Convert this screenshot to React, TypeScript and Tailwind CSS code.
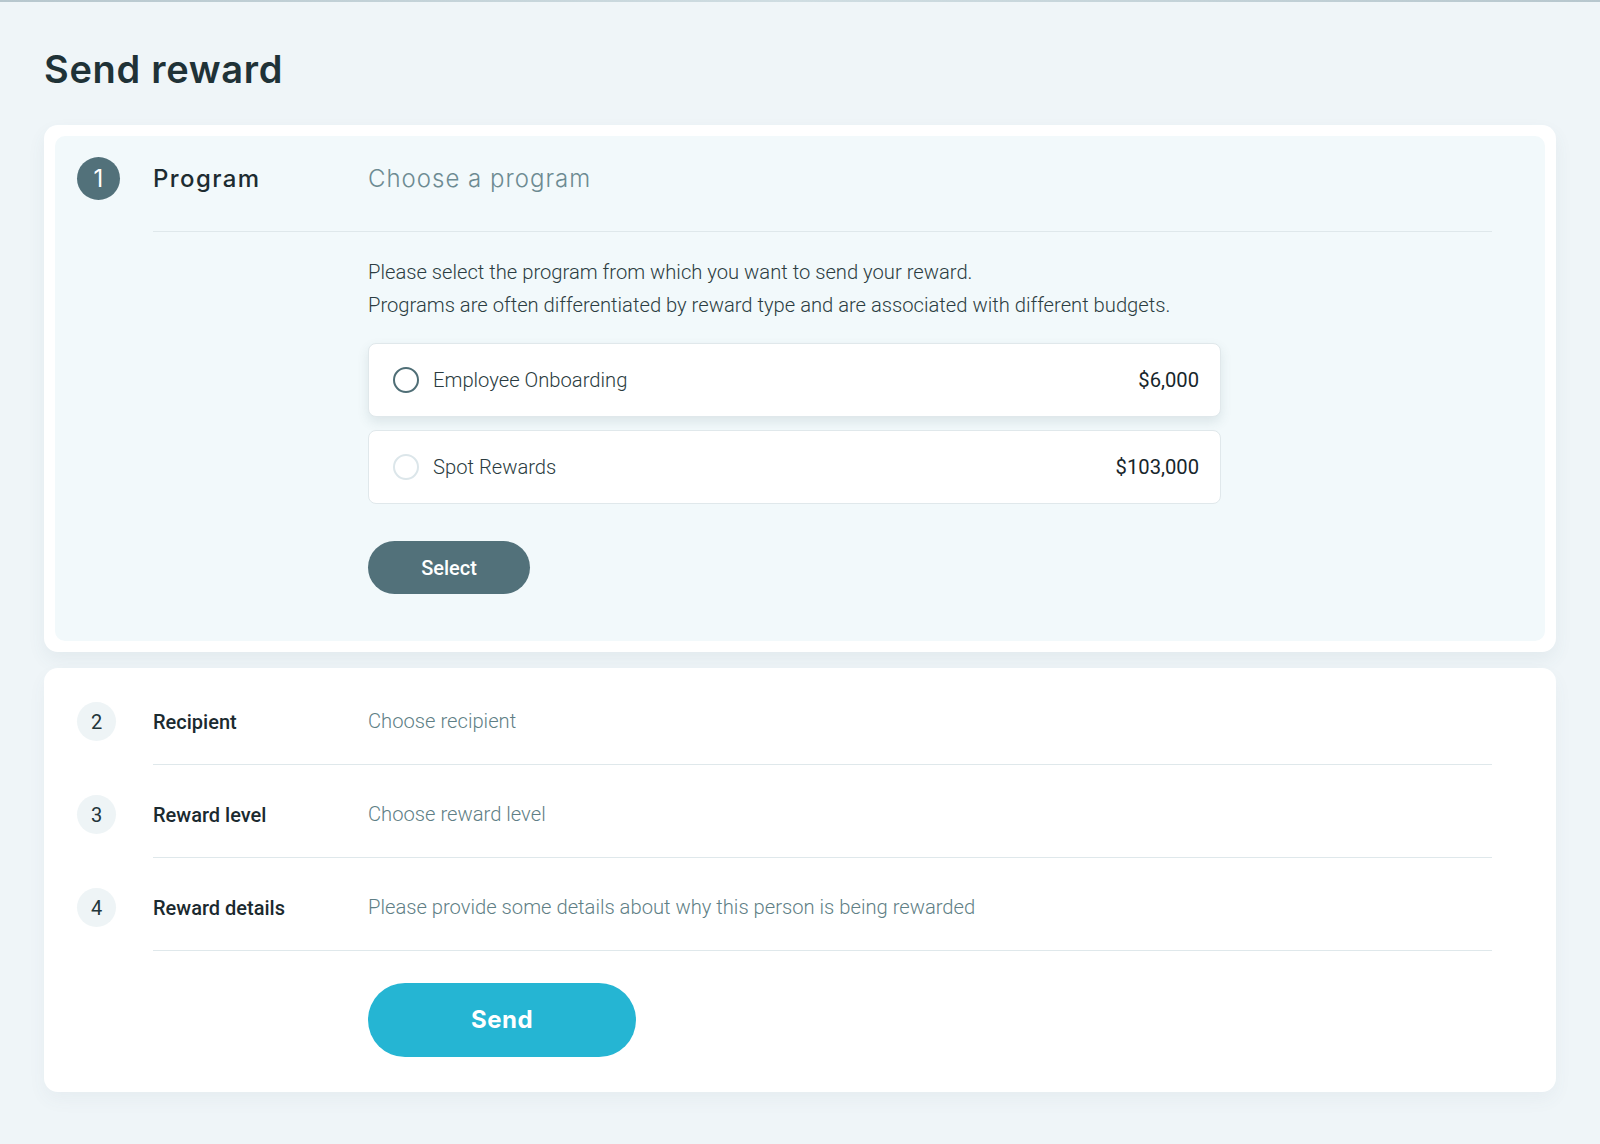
import React from "react";

const steps = [
  { n: 2, label: "Recipient", hint: "Choose recipient" },
  { n: 3, label: "Reward level", hint: "Choose reward level" },
  {
    n: 4,
    label: "Reward details",
    hint: "Please provide some details about why this person is being rewarded",
  },
];

const programs = [
  { name: "Employee Onboarding", amount: "$6,000", selected: true },
  { name: "Spot Rewards", amount: "$103,000", selected: false },
];

const roboto = "font-['Roboto',_'Liberation_Sans',_sans-serif]";
const display = "font-['Inter',_'Open_Sans',_sans-serif]";

export default function App() {
  return (
    <div className={`min-h-screen bg-[#eff5f8] pb-[54px] ${roboto}`}>
      {/* top edge */}
      <div className="h-[2px] bg-linear-to-r from-[#b7c7ce] via-[#cfdde2] to-[#b7c7ce]" />

      <div className="px-11">
        <h1
          className={`pt-[44px] text-[38px] leading-[46px] font-semibold tracking-[0.7px] text-[#1f3237] ${display}`}
        >
          Send reward
        </h1>

        {/* Step 1 - active */}
        <section className="mt-[33px] rounded-[14px] bg-white p-[11px] shadow-[0_8px_18px_rgba(70,100,115,0.07)]">
          <div className="flex rounded-[10px] bg-[#f2f9fb] pl-[22px] pt-[21px] pb-[47px]">
            <div
              className={`flex h-[43px] w-[43px] shrink-0 items-center justify-center rounded-full bg-[#52717a] text-[24px] font-normal text-white ${display}`}
            >
              1
            </div>

            <div className="ml-[33px] flex-1 pr-[53px]">
              <div className="flex h-[75px] items-start border-b border-[#dfe8eb]">
                <div className="flex h-[43px] items-center">
                  <span
                    className={`w-[215px] text-[24px] font-medium tracking-[1.4px] text-[#1d2c31] ${display}`}
                  >
                    Program
                  </span>
                  <span
                    className={`text-[24px] font-light tracking-[1px] text-[#6d8b92] ${display}`}
                  >
                    Choose a program
                  </span>
                </div>
              </div>

              <div className="pl-[215px] pt-[24px]">
                <p className="text-[20.2px] leading-[32.5px] font-light text-[#2c3d42]">
                  Please select the program from which you want to send your reward.
                  <br />
                  Programs are often differentiated by reward type and are associated
                  with different budgets.
                </p>

                <div className="mt-[22px] flex w-[853px] flex-col gap-[13px]">
                  {programs.map((p) => (
                    <label
                      key={p.name}
                      className={`flex h-[74px] items-center rounded-[8px] border border-[#e0e8eb] bg-white pl-[24px] pr-[21px] ${
                        p.selected ? "shadow-[0_5px_12px_rgba(60,90,100,0.12)]" : ""
                      }`}
                    >
                      <span
                        className={`h-[26px] w-[26px] shrink-0 rounded-full border-[2.5px] ${
                          p.selected ? "border-[#4f6e76]" : "border-[#dce6ea]"
                        }`}
                      />
                      <span className="ml-[14px] flex-1 text-[20.2px] font-light text-[#2a3b40]">
                        {p.name}
                      </span>
                      <span className="text-[20.2px] text-[#17262b]">{p.amount}</span>
                    </label>
                  ))}
                </div>

                <button className="mt-[37px] h-[53px] w-[162px] rounded-full bg-[#52717a] text-[20px] font-medium text-white">
                  Select
                </button>
              </div>
            </div>
          </div>
        </section>

        {/* Steps 2-4 */}
        <section className="mt-[16px] rounded-[14px] bg-white pt-[4px] pb-[35px] pl-[33px] pr-[64px] shadow-[0_8px_18px_rgba(70,100,115,0.05)]">
          {steps.map((s) => (
            <div key={s.n} className="flex">
              <div className="mt-[30px] flex h-[39px] w-[39px] shrink-0 items-center justify-center rounded-full bg-[#eef4f6] text-[20px] text-[#22353a]">
                {s.n}
              </div>
              <div className="ml-[37px] flex flex-1 items-center border-b border-[#dfe8eb] pt-[30px] pb-[23px]">
                <div className="flex h-[39px] items-center">
                  <span className="w-[215px] text-[20px] font-medium text-[#1b2a2f]">
                    {s.label}
                  </span>
                  <span className="text-[20.2px] font-light text-[#5f7f86]">{s.hint}</span>
                </div>
              </div>
            </div>
          ))}

          <div className="pl-[291px] pt-[32px]">
            <button
              className={`h-[74px] w-[268px] rounded-full bg-[#25b5d3] text-[24px] font-bold tracking-[0.5px] text-white ${display}`}
            >
              Send
            </button>
          </div>
        </section>
      </div>
    </div>
  );
}
